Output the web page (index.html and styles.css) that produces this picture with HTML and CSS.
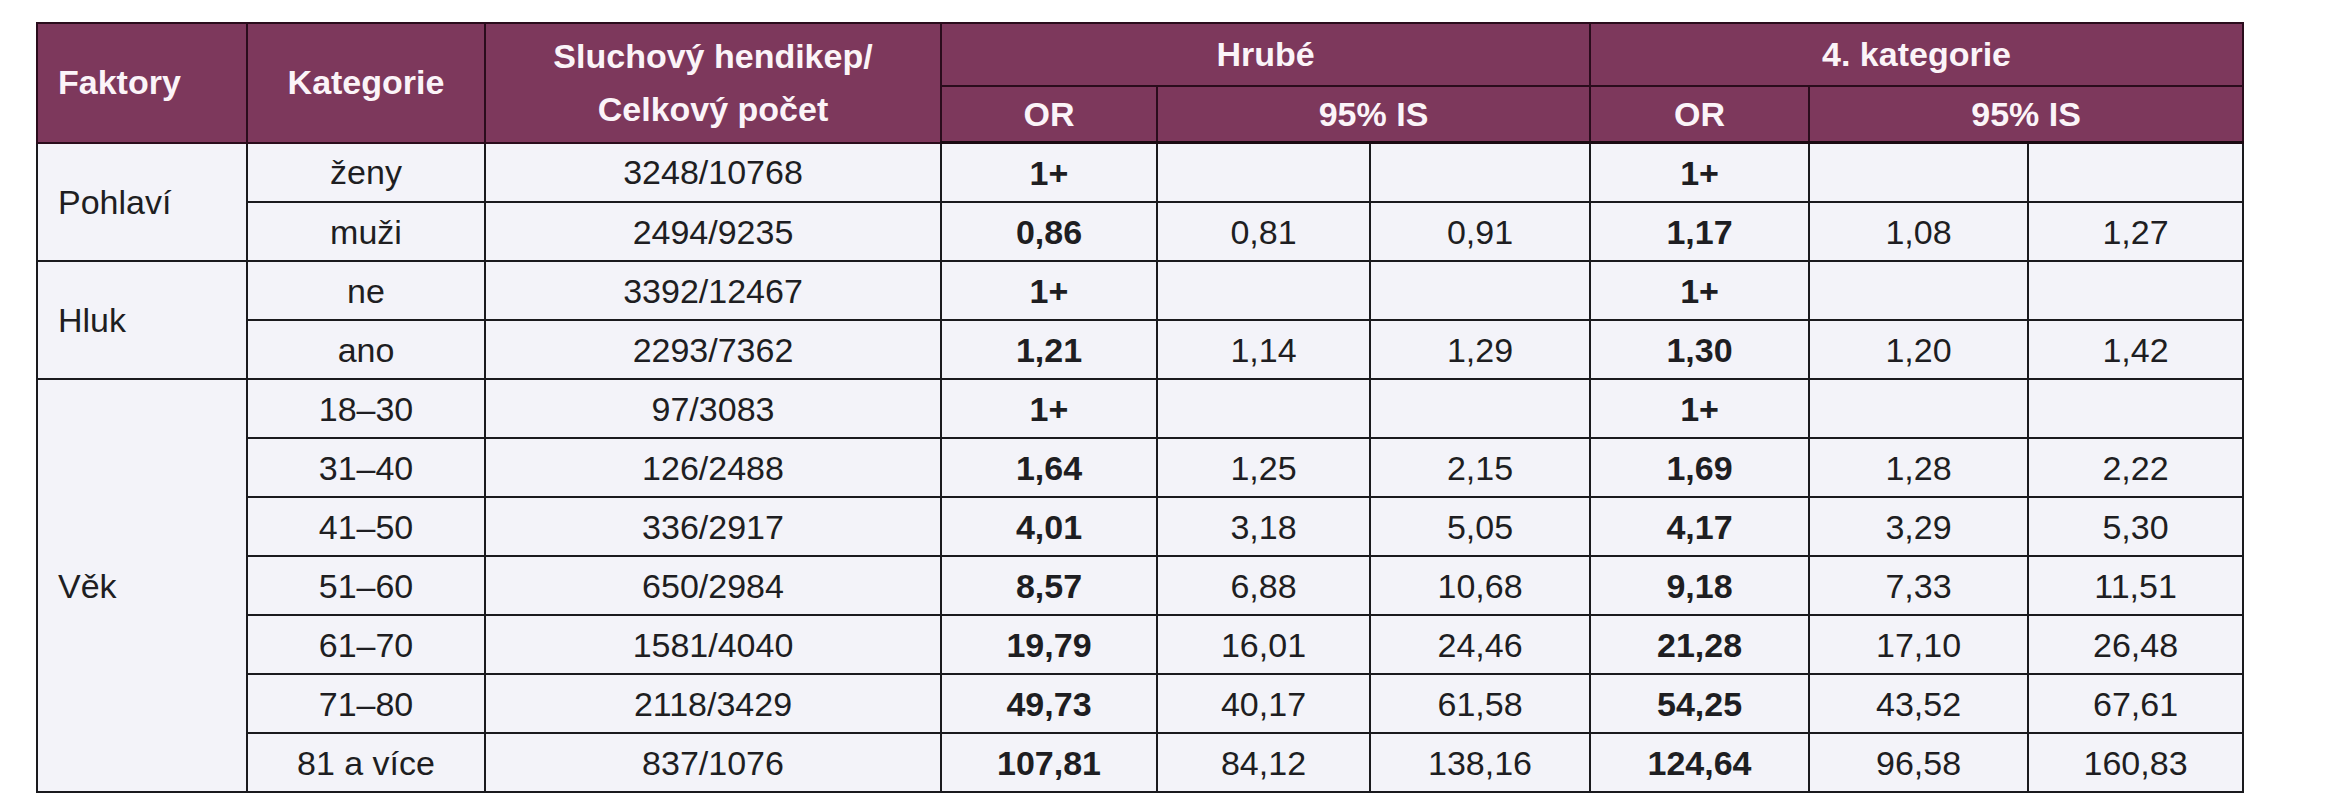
FILE: index.html
```html
<!DOCTYPE html>
<html lang="cs">
<head>
<meta charset="utf-8">
<title>Tabulka</title>
<link rel="stylesheet" href="styles.css">
</head>
<body>
<div class="wrap">
<table class="data">
  <colgroup>
    <col class="c-f"><col class="c-k"><col class="c-s">
    <col class="c-or1"><col class="c-a1"><col class="c-b1">
    <col class="c-or2"><col class="c-a2"><col class="c-b2">
  </colgroup>
  <thead>
    <tr class="h1">
      <th rowspan="2" class="left">Faktory</th>
      <th rowspan="2">Kategorie</th>
      <th rowspan="2">Sluchový hendikep/<br>Celkový počet</th>
      <th colspan="3">Hrubé</th>
      <th colspan="3">4. kategorie</th>
    </tr>
    <tr class="h2">
      <th>OR</th>
      <th colspan="2">95% IS</th>
      <th>OR</th>
      <th colspan="2">95% IS</th>
    </tr>
  </thead>
  <tbody>
    <tr><td rowspan="2" class="left">Pohlaví</td><td>ženy</td><td>3248/10768</td><td class="b">1+</td><td></td><td></td><td class="b">1+</td><td></td><td></td></tr>
    <tr><td>muži</td><td>2494/9235</td><td class="b">0,86</td><td>0,81</td><td>0,91</td><td class="b">1,17</td><td>1,08</td><td>1,27</td></tr>
    <tr><td rowspan="2" class="left">Hluk</td><td>ne</td><td>3392/12467</td><td class="b">1+</td><td></td><td></td><td class="b">1+</td><td></td><td></td></tr>
    <tr><td>ano</td><td>2293/7362</td><td class="b">1,21</td><td>1,14</td><td>1,29</td><td class="b">1,30</td><td>1,20</td><td>1,42</td></tr>
    <tr><td rowspan="7" class="left">Věk</td><td>18–30</td><td>97/3083</td><td class="b">1+</td><td></td><td></td><td class="b">1+</td><td></td><td></td></tr>
    <tr><td>31–40</td><td>126/2488</td><td class="b">1,64</td><td>1,25</td><td>2,15</td><td class="b">1,69</td><td>1,28</td><td>2,22</td></tr>
    <tr><td>41–50</td><td>336/2917</td><td class="b">4,01</td><td>3,18</td><td>5,05</td><td class="b">4,17</td><td>3,29</td><td>5,30</td></tr>
    <tr><td>51–60</td><td>650/2984</td><td class="b">8,57</td><td>6,88</td><td>10,68</td><td class="b">9,18</td><td>7,33</td><td>11,51</td></tr>
    <tr><td>61–70</td><td>1581/4040</td><td class="b">19,79</td><td>16,01</td><td>24,46</td><td class="b">21,28</td><td>17,10</td><td>26,48</td></tr>
    <tr><td>71–80</td><td>2118/3429</td><td class="b">49,73</td><td>40,17</td><td>61,58</td><td class="b">54,25</td><td>43,52</td><td>67,61</td></tr>
    <tr><td>81 a více</td><td>837/1076</td><td class="b">107,81</td><td>84,12</td><td>138,16</td><td class="b">124,64</td><td>96,58</td><td>160,83</td></tr>
  </tbody>
</table>
</div>
</body>
</html>
```
FILE: styles.css
```css
html, body {
  margin: 0;
  padding: 0;
  background: #ffffff;
}
.wrap {
  padding: 22px 0 0 36px;
}
.data {
  border-collapse: collapse;
  table-layout: fixed;
  width: 2206px;
  font-family: "Liberation Sans", Arial, sans-serif;
  font-size: 34px;
  color: #1e1e22;
}
.c-f { width: 210px; }
.c-k { width: 238px; }
.c-s { width: 456px; }
.c-or1 { width: 216px; }
.c-a1 { width: 213px; }
.c-b1 { width: 220px; }
.c-or2 { width: 219px; }
.c-a2 { width: 219px; }
.c-b2 { width: 215px; }

.data th, .data td {
  border: 2px solid #1a1a1e;
  text-align: center;
  vertical-align: middle;
  padding: 0 8px;
}
.data th {
  background: #7d385c;
  color: #fbf4f8;
  font-weight: bold;
  border-color: #2a0c1c;
  line-height: 53px;
}
.h1 th { height: 61px; }
.h2 th { height: 54px; }
.data thead tr.h2 th { border-bottom: 3px solid #1a0a12; }
.data td {
  background: #f3f3f9;
  height: 57px;
  line-height: 40px;
}
.data .left {
  text-align: left;
  padding-left: 20px;
}
.data .b { font-weight: bold; }
```
